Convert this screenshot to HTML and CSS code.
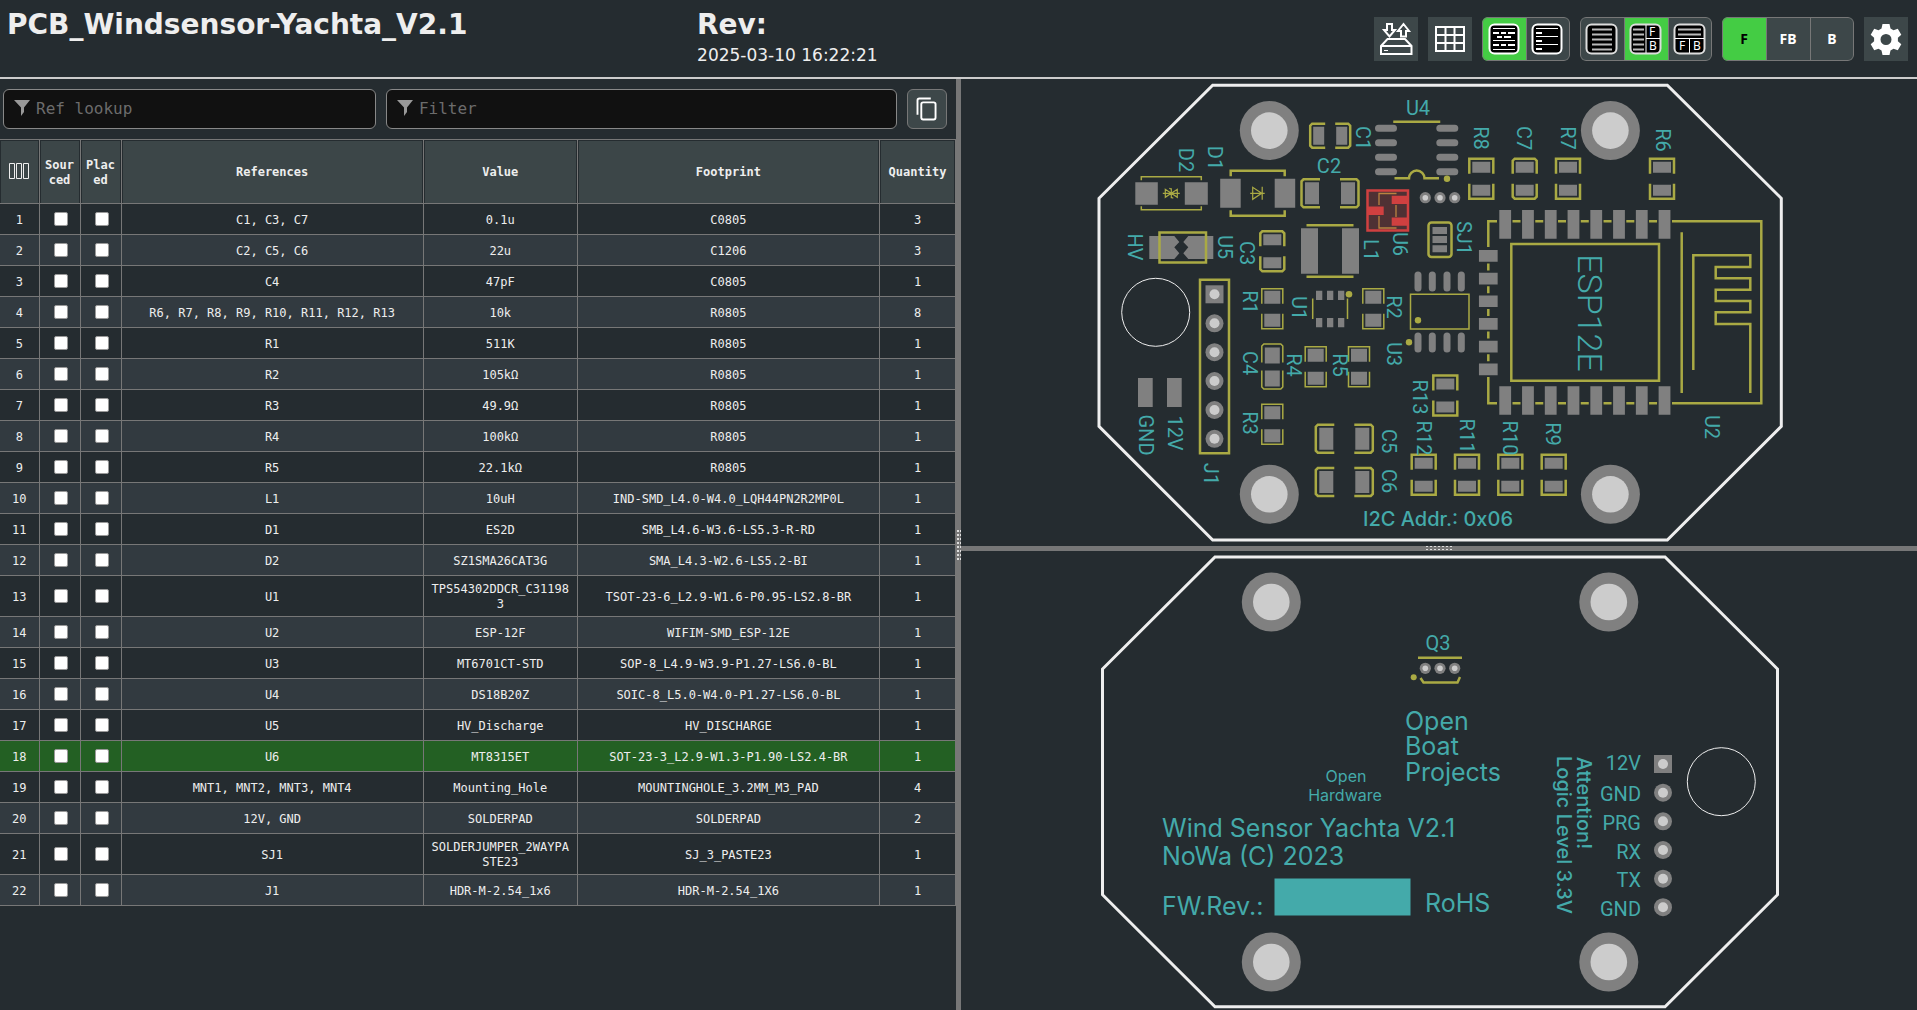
FILE: index.html
```html
<!DOCTYPE html>
<html lang="en">
<head>
<meta charset="utf-8">
<title>PCB_Windsensor-Yachta_V2.1</title>
<link rel="stylesheet" href="styles.css">
</head>
<body>
<header class="topbar">
  <h1 class="title">PCB_Windsensor-Yachta_V2.1</h1>
  <div class="revision">
    <h2 class="rev">Rev:</h2>
    <time class="date">2025-03-10 16:22:21</time>
  </div>
  <nav class="tools">
    <button class="tool" aria-label="Save and load">
      <svg class="icon" viewBox="0 0 44 44"><g fill="none" stroke="#fff" stroke-width="2"><path d="M13 7h5v6h3l-5.500 6.500L10 13h3zM27 19.500h5V14h3l-5.500-7L24 14h3z"/><path d="M7 29l6.500-7H31l6.500 7v8H7zM7 29h30.500"/></g><path d="M10 33h4v1h-4z" fill="#fff"/></svg>
    </button>
    <button class="tool" aria-label="Statistics">
      <svg class="icon" viewBox="0 0 44 44"><path d="M8 10h28v24H8zM17.500 10v24M26.500 10v24M8 18h28M8 26h28" fill="none" stroke="#fff" stroke-width="2"/></svg>
    </button>
    <div class="group">
      <button class="choice active" aria-label="Grouped rows">
        <svg class="icon" viewBox="0 0 44 44"><rect x="7.500" y="7.500" width="29" height="29" rx="5" fill="#000" stroke="#fff" stroke-width="2"/><g stroke="#fff"><path d="M11 11.500h22M11 23.500h22M11 32.500h22"/><path stroke-width="2" d="M11 16h6M19 16h5M26 16h7M15 20h5M22 20h7M11 28h6M19 28h5M26 28h7"/></g></svg>
      </button>
      <button class="choice" aria-label="Ungrouped rows">
        <svg class="icon" viewBox="0 0 44 44"><rect x="6.500" y="7.500" width="29" height="29" rx="5" fill="#000" stroke="#fff" stroke-width="2"/><g stroke="#fff"><path d="M10 11.500h22M10 19.500h22M10 27.500h22"/><path stroke-width="2" d="M10 16h6M10 24h6M10 32h6"/></g></svg>
      </button>
    </div>
    <div class="group">
      <button class="choice" aria-label="Table only">
        <svg class="icon" viewBox="0 0 44 44"><rect x="6.500" y="7.500" width="30" height="29" rx="5" fill="#000" stroke="#ddd" stroke-width="2"/><path d="M12 12.500h20M12 17.500h20M12 22.500h20M12 27.500h20M12 32.500h20" stroke="#bbb" stroke-width="2"/></svg>
      </button>
      <button class="choice active" aria-label="Table left, boards right">
        <svg class="icon" viewBox="0 0 44 44"><rect x="6.500" y="7.500" width="30" height="29" rx="5" fill="#000" stroke="#ddd" stroke-width="2"/><path d="M9 12.500h11M9 17.500h11M9 22.500h11M9 27.500h11M9 32.500h11" stroke="#bbb" stroke-width="2"/><path d="M22 8v28M22 21.500h14" stroke="#fff"/><text class="glyph" x="25" y="19">F</text><text class="glyph" x="25" y="33">B</text></svg>
      </button>
      <button class="choice" aria-label="Table top, boards below">
        <svg class="icon" viewBox="0 0 44 44"><rect x="6.500" y="7.500" width="30" height="29" rx="5" fill="#000" stroke="#ddd" stroke-width="2"/><path d="M10 12.500h23M10 17.500h23" stroke="#bbb" stroke-width="2"/><path d="M7 21.500h29M21.500 22v14" stroke="#fff"/><text class="glyph" x="11" y="33">F</text><text class="glyph" x="25" y="33">B</text></svg>
      </button>
    </div>
    <div class="group">
      <button class="choice active">F</button>
      <button class="choice">FB</button>
      <button class="choice">B</button>
    </div>
    <button class="tool" aria-label="Settings">
      <svg class="icon" viewBox="0 0 44 44"><path fill="#fff" fill-rule="evenodd" d="M18.500 7h7l1 4.500 3 1.700 4.300-1.500 3.500 6-3.400 3v3.600l3.400 3-3.500 6-4.300-1.500-3 1.700-1 4.500h-7l-1-4.500-3-1.700-4.300 1.500-3.500-6 3.400-3v-3.600l-3.400-3 3.500-6 4.300 1.500 3-1.700zM22 17a5.500 5.500 0 1 0 0 11a5.500 5.500 0 1 0 0-11z"/></svg>
    </button>
  </nav>
</header>
<main class="workspace">
  <section class="bom">
    <div class="filters">
      <label class="field field-ref">
        <svg class="funnel" viewBox="0 0 16 16"><path d="M0 0h16l-6 7.500V12l-3 4V7.500z"/></svg>
        <input class="entry" type="text" placeholder="Ref lookup" aria-label="Ref lookup">
      </label>
      <label class="field field-filter">
        <svg class="funnel" viewBox="0 0 16 16"><path d="M0 0h16l-6 7.500V12l-3 4V7.500z"/></svg>
        <input class="entry" type="text" placeholder="Filter" aria-label="Filter">
      </label>
      <button class="copy" aria-label="Copy">
        <svg class="icon" viewBox="0 0 40 40"><path d="M10 26V11a2 2 0 0 1 2-2h12" fill="none" stroke="#fff" stroke-width="2"/><rect x="14" y="13" width="15" height="18" rx="2" fill="none" stroke="#fff" stroke-width="2"/></svg>
      </button>
    </div>
    <table class="parts">
      <colgroup><col class="c-num"><col class="c-check"><col class="c-check"><col><col class="c-value"><col><col class="c-qty"></colgroup>
      <thead>
        <tr>
          <th aria-label="Columns"><svg class="columns" viewBox="0 0 20 16"><path d="M.5.500h5v15h-5zM7.500.500h5v15h-5zM14.500.500h5v15h-5z" fill="none" stroke="#eee"/></svg></th>
          <th>Sourced</th><th>Placed</th><th>References</th><th>Value</th><th>Footprint</th><th>Quantity</th>
        </tr>
      </thead>
      <tbody id="rows"></tbody>
    </table>
  </section>
  <div class="split split-v"></div>
  <section class="boards">
    <div class="board board-front">
      <svg class="pcb" viewBox="961 79 956 467">
        <defs>
          <g id="hole"><circle r="29.500" fill="#808080"/><circle r="18.300" fill="#ccc"/></g>
          <g id="pin"><circle r="9" fill="#808080"/><circle r="5" fill="#ccc"/></g>
          <g id="via"><circle r="5.600" fill="#808080"/><circle r="2.800" fill="#ccc"/></g>
          <g id="rbig"><path class="pad" d="M-9-17H9V-6H-9zM-9 6H9V17H-9z"/><path class="silk" d="M-12-5V-20H12V-5M-12 5V20H12V5"/></g>
          <g id="cbig"><path class="pad" d="M-9-17H9V-6H-9zM-9 6H9V17H-9z"/><path class="silk" d="M-12-5V-18L-10-20H10L12-18V-5M-12 5V18L-10 20H10L12 18V5"/></g>
          <g id="rsmall"><path class="pad" d="M-8-18H8V-5H-8zM-8 5H8V18H-8z"/><path class="silk thin" d="M-10.500-5V-20H10.500V-5M-10.500 5V20H10.500V5"/></g>
          <g id="cwide"><path class="pad" d="M-25-11H-11V11H-25zM11-11H25V11H11z"/><path class="silk" d="M-10-14H-26.500L-28.500-12V12L-26.500 14H-10M10-14H26.500L28.500-12V12L26.500 14H10"/></g>
        </defs>
        <path class="edge" d="M1212.700 85.300H1667.300L1781.300 198.300V426.300L1667.300 540H1212.700L1099 426.300V198.300z"/>
        <use href="#hole" x="1269.300" y="130.600"/><use href="#hole" x="1610.400" y="130.600"/>
        <use href="#hole" x="1269.300" y="494.300"/><use href="#hole" x="1610.400" y="494.300"/>
        <circle class="cut" cx="1155.700" cy="312.300" r="34"/>

        <use href="#rbig" x="1481.300" y="178.700"/><use href="#cbig" x="1524.700" y="178.700"/>
        <use href="#rbig" x="1568" y="178.700"/><use href="#rbig" x="1662" y="178.700"/>
        <use href="#rbig" x="1553.700" y="474.700"/><use href="#rbig" x="1510.300" y="474.700"/>
        <use href="#rbig" x="1467" y="474.700"/><use href="#rbig" x="1423.700" y="474.700"/>
        <use href="#rbig" x="1445.300" y="395.500"/>
        <use href="#rsmall" x="1373.300" y="308.800"/><use href="#rsmall" x="1272.300" y="308.800"/>
        <use href="#rsmall" x="1272.300" y="424.300"/><use href="#rsmall" x="1315.700" y="366.700"/>
        <use href="#rsmall" x="1359" y="366.700"/>
        <use href="#cbig" x="1272.300" y="251.300"/>
        <g transform="translate(1330.200 135.700) rotate(90)"><use href="#cbig"/></g>
        <use href="#cwide" x="1330" y="193.300"/><use href="#cwide" x="1344.300" y="438.700"/><use href="#cwide" x="1344.300" y="482"/>
        <g transform="translate(1272.300 366.500)"><path class="pad" d="M-7.500-19H7.500V-3H-7.500zM-7.500 4H7.500V20H-7.500z"/><path class="silk thin" d="M-10.500-4V-20.500L-8.500-22.500H8.500L10.500-20.500V-4M-10.500 4V20.500L-8.500 22.500H8.500L10.500 20.500V4"/></g>

        <g transform="translate(1171.300 193.300)"><path class="pad" d="M-36-11H-13.500V11.500H-36zM13.500-11H36.500V11.500H13.500z"/><path class="silk thin" d="M-30-13V-16.500H30V-13M-30 13V16.500H30V13"/><path class="silk fine" d="M-8.500 0H8.500M0-5V5M-6-4V4L0 0zM6-4V4L0 0zM-2-5L0-4M2 5L0 4"/></g>
        <g transform="translate(1257.700 193.300)"><path class="pad" d="M-37.500-14.500H-17V14.500H-37.500zM17-14.500H37.500V14.500H17z"/><path class="silk" d="M-27-17V-22.500H27V-17M-27 17V22.500H27V17"/><path class="silk fine" d="M-7.500 0H7M4.500-6.500V6.500M-5-6V6L4 0z"/></g>
        <path class="pad" d="M1149.300 236H1174.300L1179.300 242L1174.300 247.300L1179.300 253.300L1174.300 259H1149.300zM1213.300 236H1188.300L1183.300 242L1188.300 247.300L1183.300 253.300L1188.300 259H1213.300z"/>
        <path class="silk" d="M1159.500 232.500H1206V262.500H1159.500z"/>
        <path class="silk" d="M1200 279.700H1229V453.300H1200z"/>
        <path class="pad" d="M1205.500 285.300h18v18h-18z"/><circle cx="1214.500" cy="294.300" r="5" fill="#ccc"/>
        <use href="#pin" x="1214.500" y="323.300"/><use href="#pin" x="1214.500" y="352.200"/><use href="#pin" x="1214.500" y="381"/><use href="#pin" x="1214.500" y="410"/><use href="#pin" x="1214.500" y="438.800"/>
        <path class="pad" d="M1138 378h14.700v29H1138zM1167 378h14.700v29H1167z"/>
        <path class="pad" d="M1301 228.300h17v45.400h-17zM1342 228.300h17v45.400h-17z"/>
        <path class="silk" d="M1306.500 225.300H1353.500M1306.500 276.700H1353.500"/>
        <rect x="1367.500" y="190.500" width="40.500" height="40" fill="#d04040" fill-opacity=".25" stroke="#d04040" stroke-width="2.500"/>
        <path d="M1379 205V193.500H1396.500M1379 216V228H1396.500M1396 205V217" fill="none" stroke="#b98340" stroke-width="1.300"/>
        <path d="M1368 206.500h15.700v8.500H1368zM1391.700 195.700h15.300v8.300h-15.300zM1391.700 217.500h15.300v8.300h-15.300z" fill="#d04040"/>
        <path class="pad" d="M1316 290.700h6.300v9.300H1316zM1327 290.700h6.300v9.300H1327zM1338 290.700h6.300v9.300H1338zM1316 318h6.300v9.300H1316zM1327 318h6.300v9.300H1327zM1338 318h6.300v9.300H1338z"/>
        <path class="silk thin" d="M1312.700 298.500V319M1347.500 298.500V319"/><circle class="dot" cx="1349" cy="294.300" r="3.300"/>
        <path class="pill" d="M1378.500 128.300h15M1378.500 142.700h15M1378.500 157.300h15M1378.500 171.700h15M1439.800 128.300h15M1439.800 142.700h15M1439.800 157.300h15M1439.800 171.700h15"/>
        <path class="silk" d="M1394.500 123V121.800H1439V123M1394.500 178.300H1409A7.500 7.500 0 0 1 1424.500 178.300H1439"/><circle class="dot" cx="1447" cy="178.700" r="3.200"/>
        <use href="#via" x="1425.300" y="197.700"/><use href="#via" x="1440" y="197.700"/><use href="#via" x="1454.700" y="197.700"/>
        <rect class="silk" x="1428.500" y="222.500" width="23" height="34.500" rx="3"/>
        <path class="pad" d="M1432.500 227h14.500v7h-14.500zM1432.500 236h14.500v7h-14.500zM1432.500 245.300h14.500v7h-14.500z"/>
        <path class="pill" d="M1418 275v13M1432.300 275v13M1447 275v13M1461.300 275v13M1418 336v13M1432.300 336v13M1447 336v13M1461.300 336v13"/>
        <path class="silk thin" d="M1410.500 294.300H1469V329H1410.500z"/><circle class="dot" cx="1418" cy="320.300" r="3.200"/><circle class="dot" cx="1409" cy="342.300" r="3.200"/>

        <path class="silk" d="M1497 221.300H1488.300V247M1488.300 377V403.300H1497M1672 221.300H1761.300V403.300H1672"/>
        <path class="silk" stroke-dasharray="8 14.760" d="M1512.500 221.300H1660M1512.500 403.300H1660"/>
        <path class="silk" stroke-dasharray="7 15.700" d="M1488.300 263.500V362"/>
        <path stroke="#808080" stroke-width="28.700" stroke-dasharray="11.800 10.960" d="M1499.300 224.400H1671M1499.300 400.500H1671"/>
        <path stroke="#808080" stroke-width="18.700" stroke-dasharray="11.700 11" d="M1488.300 250V376"/>
        <path class="silk" d="M1511.300 244H1659V380.700H1511.300zM1681.700 232.300V393M1693.300 370V255.300H1750.300V267H1715.700V278.300H1750.300V289.700H1715.700V301H1750.300V312.300H1715.700V324H1750.300V393"/>

        <g class="label">
          <text transform="translate(1179 160) rotate(90)">D2</text>
          <text transform="translate(1208 158) rotate(90)">D1</text>
          <text transform="translate(1356 138) rotate(90)">C1</text>
          <text x="1329" y="173">C2</text>
          <text x="1418" y="115">U4</text>
          <text transform="translate(1128 247) rotate(90)">HV</text>
          <text transform="translate(1218 247) rotate(90)">U5</text>
          <text transform="translate(1240 253) rotate(90)">C3</text>
          <text transform="translate(1364 250) rotate(90)">L1</text>
          <text transform="translate(1393 244) rotate(90)">U6</text>
          <text transform="translate(1243 302) rotate(90)">R1</text>
          <text transform="translate(1292 308) rotate(90)">U1</text>
          <text transform="translate(1387 307) rotate(90)">R2</text>
          <text transform="translate(1474 138) rotate(90)">R8</text>
          <text transform="translate(1517 138) rotate(90)">C7</text>
          <text transform="translate(1561 138) rotate(90)">R7</text>
          <text transform="translate(1656 140) rotate(90)">R6</text>
          <text transform="translate(1457 238) rotate(90)">SJ1</text>
          <text class="big" transform="translate(1578 313) rotate(90)">ESP12E</text>
          <text transform="translate(1243 363) rotate(90)">C4</text>
          <text transform="translate(1287 365) rotate(90)">R4</text>
          <text transform="translate(1333 365) rotate(90)">R5</text>
          <text transform="translate(1387 354) rotate(90)">U3</text>
          <text transform="translate(1243 423) rotate(90)">R3</text>
          <text transform="translate(1413 397) rotate(90)">R13</text>
          <text transform="translate(1417 438) rotate(90)">R12</text>
          <text transform="translate(1460 436) rotate(90)">R11</text>
          <text transform="translate(1503 438) rotate(90)">R10</text>
          <text transform="translate(1546 434) rotate(90)">R9</text>
          <text transform="translate(1705 427) rotate(90)">U2</text>
          <text transform="translate(1382 441) rotate(90)">C5</text>
          <text transform="translate(1382 481) rotate(90)">C6</text>
          <text transform="translate(1204 474) rotate(90)">J1</text>
          <text transform="translate(1139 435) rotate(90)">GND</text>
          <text transform="translate(1168 433) rotate(90)">12V</text>
          <text class="note" x="1438" y="526">I2C Addr.: 0x06</text>
        </g>
      </svg>
    </div>
    <div class="split split-h"></div>
    <div class="board board-back">
      <svg class="pcb" viewBox="961 551 956 459">
        <path class="edge" d="M1215 557H1665L1777.500 669V894.700L1665 1006.700H1215L1102.500 894.700V669z"/>
        <use href="#hole" x="1271.300" y="602"/><use href="#hole" x="1608.800" y="602"/>
        <use href="#hole" x="1271.300" y="962"/><use href="#hole" x="1608.800" y="962"/>
        <circle class="cut" cx="1721.300" cy="781.700" r="34"/>
        <path class="silk" d="M1418 657.700H1462M1420.500 678L1423.500 682.500H1457.500L1460 677"/><circle class="dot" cx="1413.700" cy="677.300" r="3"/>
        <use href="#via" x="1425.300" y="668.300"/><use href="#via" x="1440" y="668.300"/><use href="#via" x="1454.700" y="668.300"/>
        <path class="pad" d="M1654 755h18v18h-18z"/><circle cx="1663" cy="764" r="5" fill="#ccc"/>
        <use href="#pin" x="1663" y="792.700"/><use href="#pin" x="1663" y="821.300"/><use href="#pin" x="1663" y="850"/><use href="#pin" x="1663" y="878.700"/><use href="#pin" x="1663" y="907.200"/>
        <path fill="#4aa" d="M1274.500 878.500h136V915.500h-136z"/>
        <g class="label">
          <text x="1438" y="650">Q3</text>
          <text class="small" x="1346" y="782">Open</text>
          <text class="small" x="1345" y="801">Hardware</text>
          <g class="wide">
            <text x="1405" y="730">Open</text>
            <text x="1405" y="755">Boat</text>
            <text x="1405" y="781">Projects</text>
            <text x="1162" y="837">Wind Sensor Yachta V2.1</text>
            <text x="1162" y="865">NoWa (C) 2023</text>
            <text x="1162" y="915">FW.Rev.:</text>
            <text x="1425" y="912">RoHS</text>
          </g>
          <g class="note">
            <text transform="translate(1577 803) rotate(90)">Attention!</text>
            <text transform="translate(1557 835) rotate(90)">Logic Level 3.3V</text>
          </g>
          <g class="right">
            <text x="1641" y="770">12V</text>
            <text x="1641" y="801">GND</text>
            <text x="1641" y="830">PRG</text>
            <text x="1641" y="859">RX</text>
            <text x="1641" y="887">TX</text>
            <text x="1641" y="916">GND</text>
          </g>
        </g>
      </svg>
    </div>
  </section>
</main>
<script src="bom.js"></script>
</body>
</html>
```
FILE: styles.css
```css
* {
  box-sizing: border-box;
}

body {
  margin: 0;
  height: 100vh;
  display: flex;
  flex-direction: column;
  overflow: hidden;
  background: #252c30;
  color: #eee;
  font-family: "DejaVu Sans", sans-serif;
}

button {
  margin: 0;
  padding: 0;
  border: 0;
  color: #fff;
  background: #3d4749;
  font: bold 14px/18px "Noto Sans", sans-serif;
}

.topbar {
  flex: none;
  display: flex;
  align-items: center;
  padding: 7px 9px 6px 7px;
  border-bottom: 2px solid #ccc;
}

.title,
.rev {
  margin: 0;
  font-size: 28px;
  line-height: 36px;
  font-weight: bold;
}

.title {
  width: 36.3%;
  align-self: flex-start;
}

.revision {
  flex: 1;
}

.date {
  display: block;
  padding-bottom: 4px;
  font-size: 17px;
  line-height: 24px;
}

.tools {
  display: flex;
  gap: 10px;
}

.tool,
.choice {
  width: 44px;
  height: 44px;
}

.group {
  position: relative;
  display: flex;
  border-radius: 6px;
  overflow: hidden;
}

.group::after {
  content: "";
  position: absolute;
  inset: 0;
  border: 1px solid #777;
  border-radius: 6px;
  pointer-events: none;
}

.choice + .choice {
  box-shadow: inset 1px 0 #777;
}

.active {
  background: #4c4;
  color: #000;
}

.icon {
  display: block;
  width: 100%;
  height: 100%;
}

.glyph {
  font: 12px "Noto Sans", sans-serif;
  fill: #fff;
}

.workspace {
  flex: 1;
  min-height: 0;
  display: flex;
}

.bom,
.boards {
  flex: 1 1 0;
  min-width: 0;
}

.boards {
  display: flex;
  flex-direction: column;
}

.board {
  min-height: 0;
}

.board-front {
  flex: 467 1 0;
}

.board-back {
  flex: 459 1 0;
}

.pcb {
  display: block;
  width: 100%;
  height: 100%;
}

.split {
  flex: 0 0 5px;
  display: grid;
  place-items: center;
  background: #777;
}

.split::after {
  content: "";
}

.split-v::after {
  width: 5px;
  height: 30px;
  background: conic-gradient(#ddd 25%, transparent 0) 0 0 / 3px 4px;
}

.split-h::after {
  width: 30px;
  height: 5px;
  background: conic-gradient(#ddd 25%, transparent 0) 0 0 / 4px 3px;
}

.filters {
  display: flex;
  gap: 10px;
  padding: 10px 9px 10px 3px;
}

.field {
  display: flex;
  align-items: center;
  gap: 6px;
  height: 40px;
  padding: 0 10px;
  border: 1px solid #888;
  border-radius: 6px;
  background: #111;
}

.field-ref {
  flex: 0 0 39.5%;
}

.field-filter {
  flex: 1;
}

.funnel {
  flex: none;
  width: 16px;
  height: 16px;
  margin-bottom: 2px;
  fill: #999;
}

.entry {
  flex: 1;
  min-width: 0;
  padding: 0;
  border: 0;
  outline: 0;
  background: none;
  color: #eee;
  font: 16px/24px "DejaVu Sans Mono", monospace;
}

.entry::placeholder {
  color: #6c6c6c;
}

.copy {
  flex: none;
  width: 40px;
  height: 40px;
  border: 1px solid #777;
  border-radius: 6px;
}

.parts {
  width: 100%;
  table-layout: fixed;
  border-collapse: collapse;
  font: 12px/15px "DejaVu Sans Mono", monospace;
  text-align: center;
}

.c-num {
  width: 39px;
}

.c-check {
  width: 41px;
}

.c-value {
  width: 154px;
}

.c-qty {
  width: 76px;
}

.parts th,
.parts td {
  padding: 6px 5px 4px;
  border: 1px solid #777;
  word-break: break-all;
}

.parts th:first-child,
.parts td:first-child {
  border-left: 0;
}

.parts th {
  height: 64px;
  background: #3c4648;
  box-shadow: inset 1px 1px #252c30, inset -1px 0 #252c30;
}

.parts td {
  height: 31px;
}

.parts tbody tr:nth-child(even) {
  background: #323a40;
}

.parts tbody tr.selected {
  background: #236023;
}

.columns {
  display: block;
  width: 20px;
  height: 16px;
  margin: 0 auto 4px;
}

.check {
  appearance: none;
  display: block;
  width: 14px;
  height: 14px;
  margin: 0 7px 2px 9px;
  border: 1px solid #999;
  border-radius: 2px;
  background: #fff;
}

.edge {
  fill: none;
  stroke: #eee;
  stroke-width: 3;
}

.cut {
  fill: none;
  stroke: #eee;
  stroke-width: 1;
}

.pad {
  fill: #808080;
}

.pill {
  fill: none;
  stroke: #808080;
  stroke-width: 7;
  stroke-linecap: round;
}

.silk {
  fill: none;
  stroke: #aa4;
  stroke-width: 2.5;
}

.thin {
  stroke-width: 1.5;
}

.fine {
  stroke-width: 1.2;
}

.dot {
  fill: #aa4;
}

.label {
  fill: #4aa;
  font: 20px Roboto, sans-serif;
  text-anchor: middle;
}

.note {
  font-family: Inter, sans-serif;
  font-weight: 500;
}

.right {
  text-anchor: end;
}

.big {
  font-size: 34px;
  font-weight: 300;
}

.small {
  font: 16px Inter, sans-serif;
}

.wide {
  font: 25px Inter, sans-serif;
  text-anchor: start;
}
```
FILE: bom.js
```js
const parts = [
  ["C1, C3, C7", "0.1u", "C0805", 3],
  ["C2, C5, C6", "22u", "C1206", 3],
  ["C4", "47pF", "C0805", 1],
  ["R6, R7, R8, R9, R10, R11, R12, R13", "10k", "R0805", 8],
  ["R1", "511K", "R0805", 1],
  ["R2", "105kΩ", "R0805", 1],
  ["R3", "49.9Ω", "R0805", 1],
  ["R4", "100kΩ", "R0805", 1],
  ["R5", "22.1kΩ", "R0805", 1],
  ["L1", "10uH", "IND-SMD_L4.0-W4.0_LQH44PN2R2MP0L", 1],
  ["D1", "ES2D", "SMB_L4.6-W3.6-LS5.3-R-RD", 1],
  ["D2", "SZ1SMA26CAT3G", "SMA_L4.3-W2.6-LS5.2-BI", 1],
  ["U1", "TPS54302DDCR_C311983", "TSOT-23-6_L2.9-W1.6-P0.95-LS2.8-BR", 1],
  ["U2", "ESP-12F", "WIFIM-SMD_ESP-12E", 1],
  ["U3", "MT6701CT-STD", "SOP-8_L4.9-W3.9-P1.27-LS6.0-BL", 1],
  ["U4", "DS18B20Z", "SOIC-8_L5.0-W4.0-P1.27-LS6.0-BL", 1],
  ["U5", "HV_Discharge", "HV_DISCHARGE", 1],
  ["U6", "MT8315ET", "SOT-23-3_L2.9-W1.3-P1.90-LS2.4-BR", 1],
  ["MNT1, MNT2, MNT3, MNT4", "Mounting_Hole", "MOUNTINGHOLE_3.2MM_M3_PAD", 4],
  ["12V, GND", "SOLDERPAD", "SOLDERPAD", 2],
  ["SJ1", "SOLDERJUMPER_2WAYPASTE23", "SJ_3_PASTE23", 1],
  ["J1", "HDR-M-2.54_1x6", "HDR-M-2.54_1X6", 1],
];
const selected = "U6";
const body = document.getElementById("rows");

parts.forEach((part, index) => {
  const row = body.insertRow();
  if (part[0] === selected) row.className = "selected";
  row.insertCell().textContent = index + 1;
  for (const state of ["Sourced", "Placed"]) {
    const box = document.createElement("input");
    box.type = "checkbox";
    box.className = "check";
    box.setAttribute("aria-label", `${state}: ${part[0]}`);
    row.insertCell().append(box);
  }
  for (const value of part) row.insertCell().textContent = value;
});
```
